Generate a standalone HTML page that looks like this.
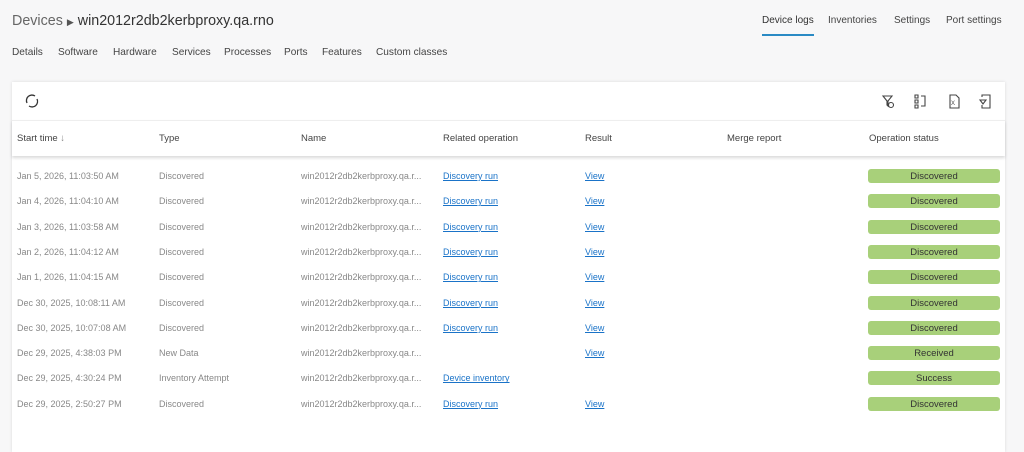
<!DOCTYPE html>
<html><head><style>
body{margin:0;width:1024px;height:437px;background:#f7f7f8;font-family:"Liberation Sans",sans-serif;overflow:hidden;position:relative}
.a{position:absolute;white-space:nowrap}
.t{font-size:14.3px;color:#333;top:13px;left:12px}
.t .d{color:#666}
.nav{top:47px;font-size:10.1px;color:#444}
.rn{top:15px;font-size:10px;color:#444}
.card{left:12px;top:82px;width:993px;height:370px;background:#fff;box-shadow:0 0 3px rgba(0,0,0,.12)}
.hdr{left:12px;top:120px;width:993px;height:35px;background:#fff;box-shadow:0 2px 3px rgba(0,0,0,.15);border-top:1px solid #eee}
.h{top:133px;font-size:9.5px;color:#444}
.c{font-size:9px;color:#888}
.l{font-size:9px;color:#1a73c8;text-decoration:underline}
.b{left:868px;width:132px;height:14px;background:#a8d07a;border-radius:3px;font-size:9.5px;color:#333;text-align:center;line-height:15px}
</style></head><body>
<div class="a t"><span class="d">Devices</span> <span style="font-size:9px;color:#555">▶</span> win2012r2db2kerbproxy.qa.rno</div>
<div class="a nav" style="left:12px">Details</div>
<div class="a nav" style="left:58px">Software</div>
<div class="a nav" style="left:113px">Hardware</div>
<div class="a nav" style="left:172px">Services</div>
<div class="a nav" style="left:224px">Processes</div>
<div class="a nav" style="left:284px">Ports</div>
<div class="a nav" style="left:322px">Features</div>
<div class="a nav" style="left:376px">Custom classes</div>
<div class="a rn" style="left:762px;color:#333">Device logs</div>
<div class="a" style="left:762px;top:34px;width:52px;height:2px;background:#2a8ac4"></div>
<div class="a rn" style="left:828px">Inventories</div>
<div class="a rn" style="left:894px">Settings</div>
<div class="a rn" style="left:946px">Port settings</div>
<div class="a card"></div>
<svg class="a" style="left:24px;top:93px" width="16" height="16" viewBox="0 0 16 16" fill="none" stroke="#333" stroke-width="1.3"><path d="M3 10A5.5 5.5 0 0 1 11 3M13 6A5.5 5.5 0 0 1 5 13"/></svg>
<svg class="a" style="left:880px;top:93px" width="120" height="16" viewBox="0 0 120 16" fill="none" stroke="#444" stroke-width="1.1">
<path d="M3 3h9l-4 5v5l-1-1V8z"/><circle cx="11" cy="12" r="2.5"/>
<path d="M35 2h3v3h-3zM35 7h3v3h-3zM35 12h3v3h-3zM41 3h4v10h-4"/>
<path d="M70 2h6l3 3v10h-9z"/><text x="71" y="12" font-size="6" fill="#444" stroke="none">X</text>
<path d="M102 4V2h8v13h-8v-3M100 7h6l-3 4z"/>
</svg>
<div class="a hdr"></div>
<div class="a h" style="left:17px">Start time <span style="color:#888">↓</span></div>
<div class="a h" style="left:159px">Type</div>
<div class="a h" style="left:301px">Name</div>
<div class="a h" style="left:443px">Related operation</div>
<div class="a h" style="left:585px">Result</div>
<div class="a h" style="left:727px">Merge report</div>
<div class="a h" style="left:869px">Operation status</div>
<div id="rows"></div>
<script>
var d=[["Jan 5, 2026, 11:03:50 AM","Discovered","Discovery run",1,"Discovered"],
["Jan 4, 2026, 11:04:10 AM","Discovered","Discovery run",1,"Discovered"],
["Jan 3, 2026, 11:03:58 AM","Discovered","Discovery run",1,"Discovered"],
["Jan 2, 2026, 11:04:12 AM","Discovered","Discovery run",1,"Discovered"],
["Jan 1, 2026, 11:04:15 AM","Discovered","Discovery run",1,"Discovered"],
["Dec 30, 2025, 10:08:11 AM","Discovered","Discovery run",1,"Discovered"],
["Dec 30, 2025, 10:07:08 AM","Discovered","Discovery run",1,"Discovered"],
["Dec 29, 2025, 4:38:03 PM","New Data","",1,"Received"],
["Dec 29, 2025, 4:30:24 PM","Inventory Attempt","Device inventory",0,"Success"],
["Dec 29, 2025, 2:50:27 PM","Discovered","Discovery run",1,"Discovered"]];
var h="";d.forEach(function(r,i){var y=171+i*25.3;
h+='<div class="a c" style="left:17px;top:'+y+'px">'+r[0]+'</div><div class="a c" style="left:159px;top:'+y+'px">'+r[1]+'</div><div class="a c" style="left:301px;top:'+y+'px">win2012r2db2kerbproxy.qa.r...</div>';
if(r[2])h+='<div class="a l" style="left:443px;top:'+y+'px">'+r[2]+'</div>';
if(r[3])h+='<div class="a l" style="left:585px;top:'+y+'px">View</div>';
h+='<div class="a b" style="top:'+(y-2)+'px">'+r[4]+'</div>';});
document.getElementById("rows").innerHTML=h;
</script>
</body></html>
